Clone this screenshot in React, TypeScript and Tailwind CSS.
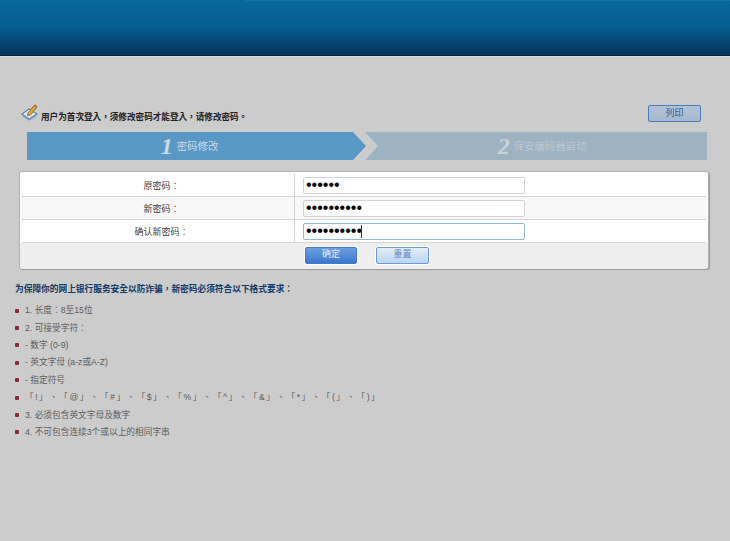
const SANS = "font-['Liberation_Sans','Noto_Sans_CJK_TC',sans-serif] [text-spacing-trim:space-all]";

const rules = [
  '1. 长度：8至15位',
  '2. 可接受字符：',
  '- 数字 (0-9)',
  '- 英文字母 (a-z或A-Z)',
  '- 指定符号',
  '「!」、「@」、「#」、「$」、「%」、「^」、「&」、「*」、「(」、「)」',
  '3. 必须包含英文字母及数字',
  '4. 不可包含连续3个或以上的相同字串',
];

function NoteIcon() {
  return (
    <svg width="18" height="18" viewBox="0 0 18 18" className="shrink-0">
      <path d="M1 11 L8 6 L16 11 L8 16 Z" fill="#dfe8f2" stroke="#5f86b3" strokeWidth="1.2" />
      <path d="M1.5 12.5 L8 17 L15.5 12.5" fill="none" stroke="#7d9cc0" strokeWidth="1.2" />
      <path d="M7 10 L13 2.5 L15.5 4.5 L9.5 12 L6.5 12.5 Z" fill="#e3a92f" stroke="#7c5a1c" strokeWidth="0.8" />
      <path d="M13 2.5 L14 1.2 L16.5 3.2 L15.5 4.5 Z" fill="#c9694a" />
    </svg>
  );
}

function Row({ label, value, shaded, focused }: { label: string; value: string; shaded?: boolean; focused?: boolean }) {
  return (
    <div className={`flex h-[23px] items-center border-b border-[#d4d4d4] ${shaded ? 'bg-[#f8f8f8]' : 'bg-white'}`}>
      <div className="w-[272px] shrink-0 pl-[7px] pt-[3px] text-center text-[9px] text-[#3a3a3a]">{label}</div>
      <div className="flex h-full flex-1 items-center border-l border-[#d4d4d4] pl-2">
        <div className="relative">
          <input
            type="password"
            readOnly
            defaultValue={value}
            className={`block h-[17px] w-[222px] rounded-[2px] border bg-white px-[2px] text-base leading-none text-black outline-none font-['Liberation_Sans',sans-serif] ${
              focused ? 'border-[#8fb8da]' : 'border-[#cfd3d8]'
            }`}
          />
          {focused && <span className="absolute left-[58px] top-[2px] h-[13px] w-px bg-[#333]" />}
        </div>
      </div>
    </div>
  );
}

export default function App() {
  return (
    <div className={`h-[541px] w-[730px] overflow-hidden bg-[#cccccc] ${SANS}`}>
      <div className="h-[56px] border-b border-[#0a2238] bg-gradient-to-b from-[#07699f] via-[#075e90] to-[#05345a] shadow-[0_1px_0_#dcdcdc]">
        <div className="ml-[245px] h-px bg-[#1a70a4]" />
      </div>

      <div className="flex h-[76px] items-start justify-between pl-[21px] pr-[29px] pt-[47px]">
        <div className="flex items-end gap-[2px]">
          <NoteIcon />
          <span className="-mb-[1px] text-[8.6px] font-bold leading-[10px] text-[#222]">用户为首次登入，须修改密码才能登入，请修改密码。</span>
        </div>
        <button className="mt-[2px] h-[17px] w-[53px] rounded-[2px] border border-[#4b7cba] bg-gradient-to-b from-[#b3c2d6] to-[#a6b7ce] text-[9px] text-[#2a5a9c]">
          列印
        </button>
      </div>

      <div className="flex h-[28px] pl-[27px]">
        <div className="flex w-[339px] items-center justify-center bg-[#5998c5] pr-[14px] [clip-path:polygon(0_0,326px_0,339px_14px,326px_28px,0_28px)]">
          <span className="mr-[4px] font-['Liberation_Serif',serif] text-[24px] font-bold italic leading-none text-[#c9dbe8]">1</span>
          <span className="pt-[2px] text-[10.4px] text-[#c9dbe8]">密码修改</span>
        </div>
        <div className="-ml-px flex w-[342px] items-center justify-center bg-[#9db3c1] pl-[12px] [clip-path:polygon(0_0,100%_0,100%_100%,0_100%,13px_50%)]">
          <span className="mr-[4px] font-['Liberation_Serif',serif] text-[24px] font-bold italic leading-none text-[#cdd3d7]">2</span>
          <span className="pt-[2px] text-[10.4px] text-[#bcc8d0]">保安编码器启动</span>
        </div>
      </div>

      <div className="ml-[19px] mt-[11px] h-[98px] w-[690px] rounded-[3px] border border-[#b0b0b0] bg-white px-[2px] pt-[2px] shadow-[1px_1px_1px_#999]">
        <Row label="原密码：" value="123456" />
        <Row label="新密码：" value="1234567890" shaded />
        <Row label="确认新密码：" value="1234567890" focused />
        <div className="-mx-[2px] flex h-[26px] items-center rounded-b-[3px] bg-[#eeeeee] pb-[2px] pl-[285px]">
          <button className="h-[17px] w-[52px] rounded-[2px] border border-[#3f7ccc] bg-gradient-to-b from-[#6c9fe0] to-[#3a78cc] text-[9px] text-[#e4eefa] shadow-[0_0_0_1px_#fff]">
            确定
          </button>
          <button className="ml-[19px] h-[17px] w-[53px] rounded-[2px] border border-[#6c9bd8] bg-gradient-to-b from-[#e4eefa] to-[#bcd4f2] text-[9px] text-[#5c86c0] shadow-[0_0_0_1px_#fff]">
            重置
          </button>
        </div>
      </div>

      <div className="pl-[15px] pt-[14px]">
        <p className="text-[8.7px] font-bold leading-[12px] text-[#123a66]">为保障你的网上银行服务安全以防诈骗，新密码必须符合以下格式要求：</p>
        <ul className="mt-[7px]">
          {rules.map((r, i) => (
            <li key={r} className={`flex h-[17.4px] items-center text-[8.7px] text-[#5c5c5c] ${i === 5 ? 'tracking-[1.45px]' : ''}`}>
              <span className="mr-[6px] h-[4px] w-[4px] shrink-0 rounded-[1px] bg-[#8f2535]" />
              {r}
            </li>
          ))}
        </ul>
      </div>
    </div>
  );
}
